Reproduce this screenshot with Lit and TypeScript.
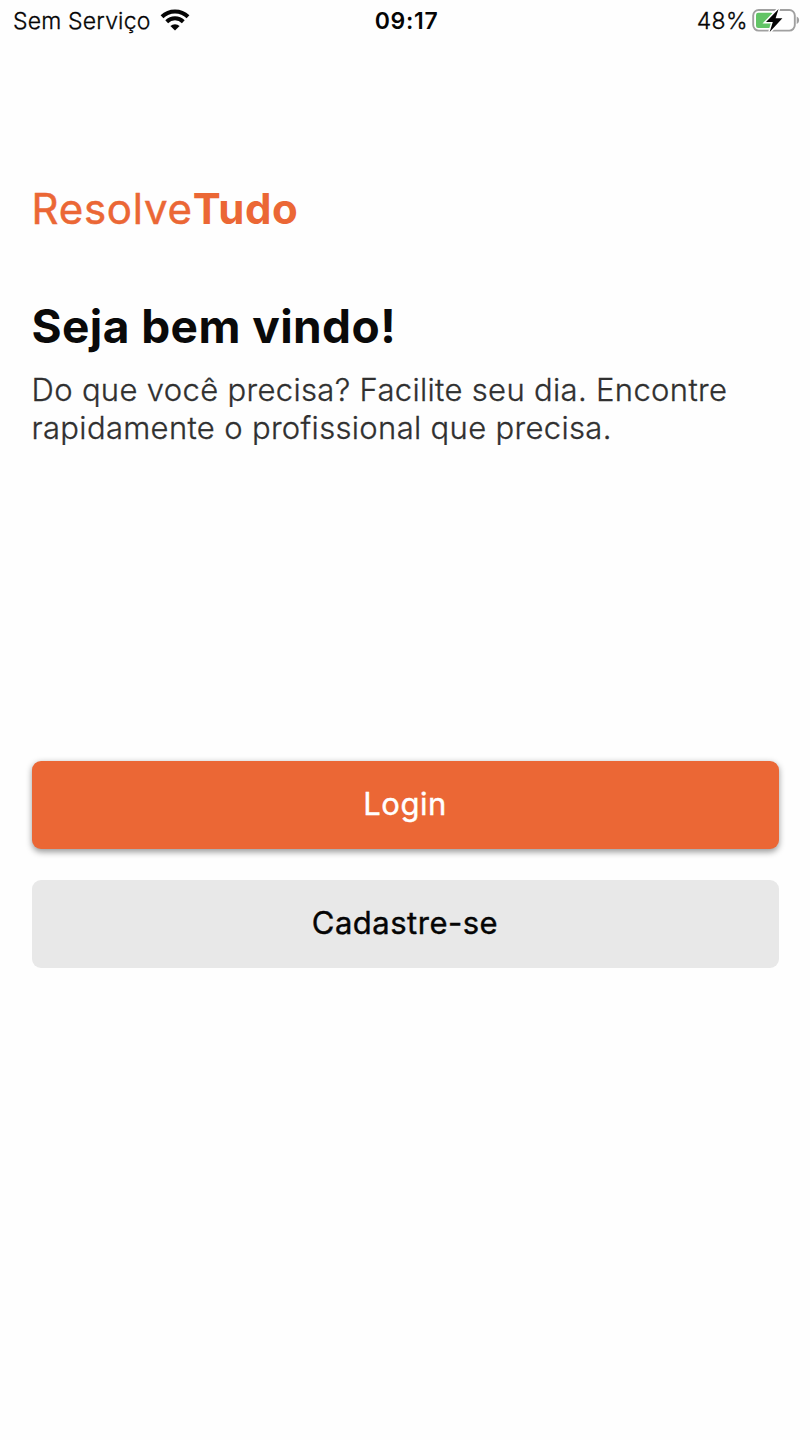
import { LitElement, html, css } from "lit";
import { customElement } from "lit/decorators.js";

@customElement("status-bar")
class StatusBar extends LitElement {
  static styles = css`
    :host { display: grid; grid-template-columns: 1fr auto 1fr; align-items: center; height: 40px; padding: 0 10px 0 13px; box-sizing: border-box; color: #050505; font-size: 23px; line-height: 40px; }
    .left { display: flex; align-items: center; gap: 9px; letter-spacing: 0.18px; font-weight: 300; -webkit-text-stroke: 0.3px; }
    .left span, .time, .right span { padding-top: 1px; }
    .time { font-weight: 600; font-size: 23px; letter-spacing: 0.7px; }
    .right { display: flex; align-items: center; justify-content: flex-end; gap: 4px; font-weight: 300; letter-spacing: 0.4px; -webkit-text-stroke: 0.3px; }
    svg { display: block; flex: none; margin-bottom: 2px; }
  `;
  render() {
    return html`
      <div class="left"><span>Sem Serviço</span>
        <svg width="30" height="22" viewBox="0 0 30 22" fill="none" stroke="#050505" stroke-width="4">
          <path d="M2 7.7a18.6 18.6 0 0 1 26 0" />
          <path d="M6.7 12.7a11.9 11.9 0 0 1 16.6 0" />
          <path d="M10.4 17.1a6.8 6.8 0 0 1 9.2 0L15 21.6z" fill="#050505" stroke="none" />
        </svg>
      </div>
      <div class="time">09:17</div>
      <div class="right"><span>48%</span>
        <svg width="48" height="26" viewBox="0 0 48 26">
          <rect x="1.2" y="3" width="41.6" height="20.6" rx="5.5" fill="#fff" stroke="#a0a0a0" stroke-width="1.9" />
          <path d="M44.7 9.6c3.2 1.3 3.2 6.1 0 7.4z" fill="#a0a0a0" />
          <rect x="4" y="5.7" width="17" height="15.2" rx="2.2" fill="#62c466" />
          <path d="M26.6 1.9L14 15h6.8L17.7 25 30.4 11.3h-6.8z" fill="#050505" stroke="#fff" stroke-width="3" paint-order="stroke" />
        </svg>
      </div>`;
  }
}

@customElement("action-button")
class ActionButton extends LitElement {
  static properties = { variant: { reflect: true } };
  declare variant: string;
  static styles = css`
    :host { display: block; }
    button { display: block; width: 100%; height: 88px; border: 0; border-radius: 9px; padding: 0 0 2px; font: 400 31px/86px Inter, sans-serif; letter-spacing: 0.5px; -webkit-text-stroke: 0.4px; background: #e8e8e8; color: #050505; }
    :host([variant="primary"]) button { background: #eb6735; color: #fff; box-shadow: 0 2.5px 6px rgba(0, 0, 0, 0.4); }
  `;
  render() {
    return html`<button><slot></slot></button>`;
  }
}

@customElement("app-root")
class AppRoot extends LitElement {
  static styles = css`
    :host { display: block; height: 1440px; background: #fefefe; font-family: Inter, sans-serif; overflow: hidden; }
    main { padding: 143px 31.5px 0; }
    .logo { font-size: 42px; line-height: 52px; letter-spacing: 0.75px; color: #eb6735; -webkit-text-stroke: 0.5px; }
    .logo b { font-weight: 700; letter-spacing: 0.6px; -webkit-text-stroke: 0; }
    h1 { margin: 63px 0 0; font-size: 46px; line-height: 56px; font-weight: 700; letter-spacing: 0.42px; color: #0a0a0a; }
    p { margin: 17px 0 0; font-size: 31px; line-height: 38px; font-weight: 300; letter-spacing: 0.33px; color: #303030; -webkit-text-stroke: 0.3px; }
    .actions { display: grid; gap: 31px; margin-top: 314px; }
  `;
  render() {
    return html`
      <status-bar></status-bar>
      <main>
        <div class="logo">Resolve<b>Tudo</b></div>
        <h1>Seja bem vindo!</h1>
        <p>Do que você precisa? Facilite seu dia. Encontre<br />rapidamente o profissional que precisa.</p>
        <div class="actions">
          <action-button variant="primary">Login</action-button>
          <action-button>Cadastre-se</action-button>
        </div>
      </main>`;
  }
}
